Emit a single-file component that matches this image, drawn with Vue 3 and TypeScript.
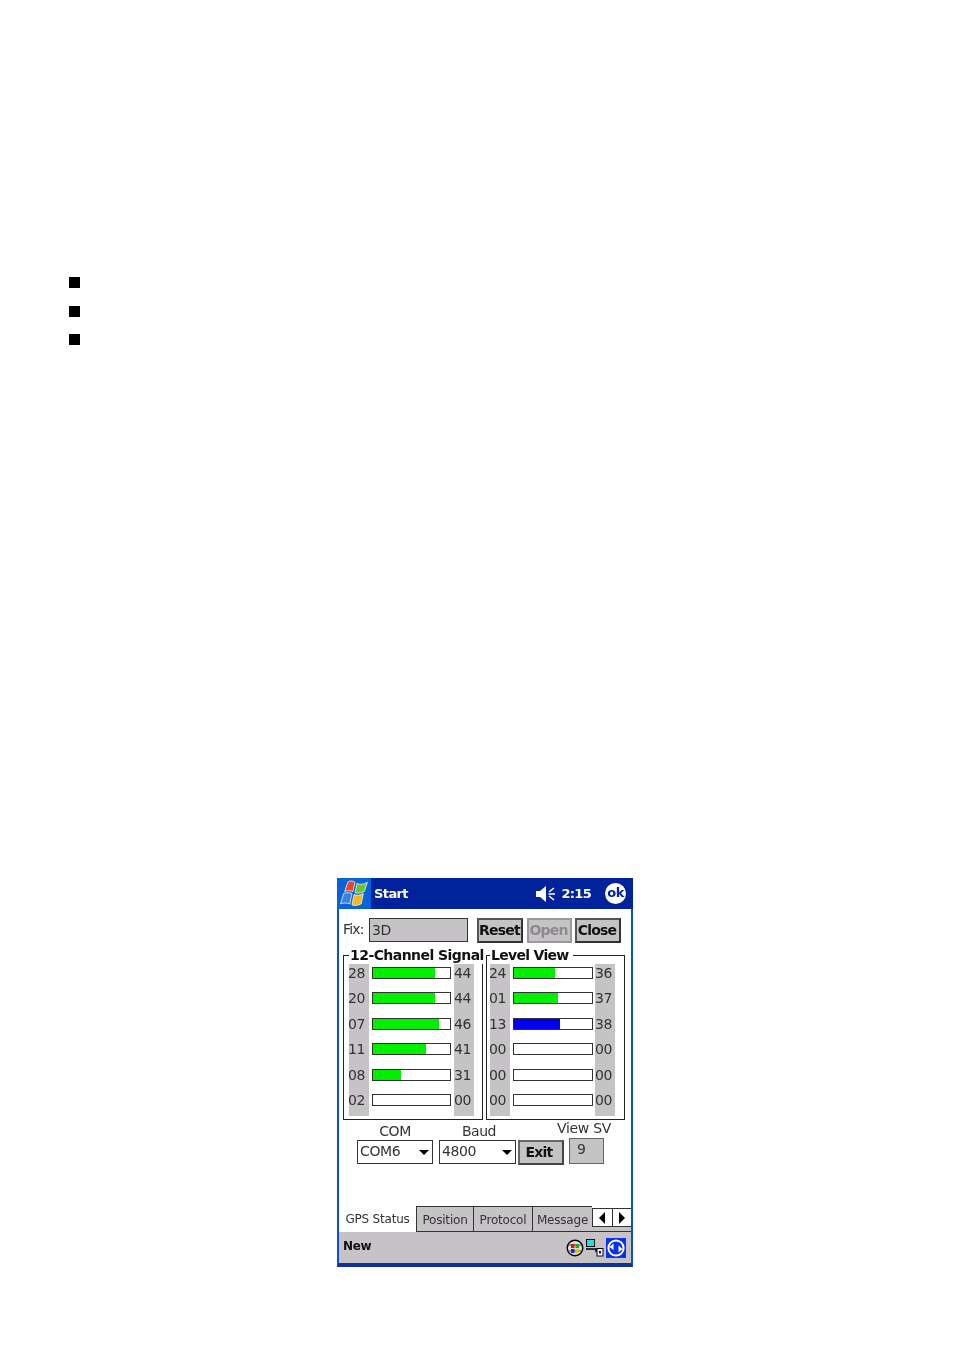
<script setup lang="ts">
interface Row { id: string; pct: number; val: string; color?: string }
const left: Row[] = [
  { id: '28', pct: 80, val: '44' },
  { id: '20', pct: 80, val: '44' },
  { id: '07', pct: 86, val: '46' },
  { id: '11', pct: 69, val: '41' },
  { id: '08', pct: 37, val: '31' },
  { id: '02', pct: 0, val: '00' },
]
const right: Row[] = [
  { id: '24', pct: 53, val: '36' },
  { id: '01', pct: 56, val: '37' },
  { id: '13', pct: 59, val: '38', color: '#0000f0' },
  { id: '00', pct: 0, val: '00' },
  { id: '00', pct: 0, val: '00' },
  { id: '00', pct: 0, val: '00' },
]
const groups = [
  { name: 'left', legend: '12-Channel Signal', rows: left },
  { name: 'right', legend: 'Level View', rows: right },
]
const tabs = ['Position', 'Protocol', 'Message']
</script>

<template>
  <main class="page">
    <ul class="bullets">
      <li></li>
      <li></li>
      <li></li>
    </ul>

    <section class="device">
      <header class="titlebar">
        <div class="start-tile">
          <svg width="32" height="31" viewBox="0 0 30 30">
            <path d="M9 4 C12 2 14 3 16 4 L14 13 C11 12 9 12 6 13 Z" fill="#e8452a" stroke="#fff" stroke-width=".7" />
            <path d="M18 5 C21 7 25 6 28 4 L25 13 C21 15 18 15 16 14 Z" fill="#6cc332" stroke="#fff" stroke-width=".7" />
            <path d="M5 15 C8 14 11 14 13 15 L11 25 C8 24 5 24 2 25 Z" fill="#3b7fe0" stroke="#fff" stroke-width=".7" />
            <path d="M15 16 C18 17 21 17 24 15 L22 25 C18 27 15 27 13 26 Z" fill="#f2b81e" stroke="#fff" stroke-width=".7" />
          </svg>
        </div>
        <span class="start-text">Start</span>
        <svg class="speaker" width="20" height="18" viewBox="0 0 20 18">
          <path d="M0 6 H4 L10 1 V17 L4 12 H0 Z" fill="#fff" />
          <path d="M18 3 L13 7 M12.5 9 H19 M13 11 L18 15" stroke="#fff" stroke-width="1.6" fill="none" />
        </svg>
        <span class="clock">2:15</span>
        <span class="ok">ok</span>
      </header>

      <div class="content">
        <div class="fix-row">
          <span class="fix-label">Fix:</span>
          <span class="fix-value">3D</span>
          <button class="btn reset">Reset</button>
          <button class="btn open">Open</button>
          <button class="btn close">Close</button>
        </div>

        <div class="groups">
          <div v-for="g in groups" :key="g.name" class="group" :class="g.name">
            <span class="legend">{{ g.legend }}</span>
            <div class="col nums first">
              <span v-for="(r, i) in g.rows" :key="i">{{ r.id }}</span>
            </div>
            <div class="col bars">
              <div v-for="(r, i) in g.rows" :key="i" class="bar">
                <div class="fill" :style="{ width: r.pct + '%', background: r.color || '#00f000' }"></div>
              </div>
            </div>
            <div class="col nums">
              <span v-for="(r, i) in g.rows" :key="i">{{ r.val }}</span>
            </div>
          </div>
        </div>

        <div class="settings">
          <div class="field com">
            <span class="field-label">COM</span>
            <div class="select"><span>COM6</span><i class="caret"></i></div>
          </div>
          <div class="field baud">
            <span class="field-label">Baud</span>
            <div class="select"><span>4800</span><i class="caret"></i></div>
          </div>
          <button class="btn exit">Exit</button>
          <div class="field view">
            <span class="field-label">View SV</span>
            <div class="sv">9</div>
          </div>
        </div>

        <nav class="tabs">
          <span class="tab active">GPS Status</span>
          <span v-for="t in tabs" :key="t" class="tab" :class="t.toLowerCase()">{{ t }}</span>
          <span class="arrow-strip">
            <span class="arrows">
              <span class="arrow"><i class="tri-l"></i></span>
              <span class="arrow"><i class="tri-r"></i></span>
            </span>
          </span>
        </nav>
      </div>

      <footer class="menubar">
        <span class="new">New</span>
        <span class="tray">
          <svg width="18" height="18" viewBox="0 0 18 18">
            <circle cx="9" cy="9" r="7.8" fill="#ddd" stroke="#000" stroke-width="1.4" />
            <path d="M2 6 H16 M2 12 H16" stroke="#333" stroke-width=".8" />
            <rect x="5" y="5" width="3.5" height="4" fill="#e01010" />
            <rect x="9.5" y="5" width="3.5" height="4" fill="#10b020" />
            <rect x="5" y="10" width="3.5" height="4" fill="#1030e0" />
            <rect x="9.5" y="10" width="3.5" height="4" fill="#e8c000" />
          </svg>
          <svg width="20" height="18" viewBox="0 0 20 18">
            <rect x="1.5" y="0.5" width="8" height="7" fill="#20e0e0" stroke="#000" />
            <path d="M1 10 H11 V13" stroke="#000" stroke-width="1.4" fill="none" />
            <rect x="12" y="9.5" width="6" height="7.5" fill="#fff" stroke="#000" />
            <rect x="14" y="12" width="2" height="2.5" fill="#0000a0" />
          </svg>
          <svg class="sync" width="20" height="20" viewBox="0 0 20 20">
            <rect width="20" height="20" fill="#0a30f0" />
            <circle cx="10" cy="10" r="7.6" fill="none" stroke="#fff" stroke-width="2" />
            <path d="M3.5 9 L7.5 5.5 V12 Z M16.5 11 L12.5 7.5 V14.5 Z" fill="#fff" />
          </svg>
        </span>
      </footer>
    </section>
  </main>
</template>

<style scoped>
.page {
  width: 954px;
  height: 1351px;
  overflow: hidden;
  background: #fff;
  padding: 277px 0 0 69px;
  box-sizing: border-box;
  font-family: "DejaVu Sans", sans-serif;
  color: #111;
}
.bullets {
  list-style: none;
  margin: 0;
  padding: 0;
  display: flex;
  flex-direction: column;
  gap: 17.5px;
}
.bullets li {
  width: 11px;
  height: 11px;
  background: #000;
}
.device {
  width: 296px;
  height: 389px;
  margin: 533px 0 0 268px;
  display: flex;
  flex-direction: column;
  box-sizing: border-box;
  border-left: 2px solid #0a4fd8;
  border-right: 2px solid #0a4fd8;
  border-bottom: 4px solid #12309a;
  background: #fff;
  filter: blur(0.35px);
}
.titlebar {
  height: 31px;
  flex: none;
  margin: 0 -2px;
  background: #00229a;
  display: flex;
  align-items: center;
  color: #fff;
}
.start-tile {
  width: 34px;
  height: 31px;
  background: #0a62d8;
  display: flex;
  align-items: center;
  justify-content: center;
  margin-right: 3px;
}
.start-text {
  font-size: 13px;
  font-weight: 700;
  letter-spacing: -0.6px;
  flex: 1;
}
.speaker {
  margin-right: 5px;
}
.clock {
  font-size: 13px;
  font-weight: 700;
  letter-spacing: -0.7px;
  margin-right: 14px;
}
.ok {
  width: 21px;
  height: 21px;
  border-radius: 50%;
  background: #fff;
  color: #00229a;
  font-size: 13px;
  font-weight: 700;
  line-height: 20px;
  text-align: center;
  margin-right: 7px;
  letter-spacing: -0.5px;
}
.content {
  flex: 1;
  display: flex;
  flex-direction: column;
  min-height: 0;
}
.fix-row {
  display: flex;
  align-items: flex-start;
  margin: 9px 0 0 4px;
  height: 25px;
}
.fix-label {
  font-size: 14px;
  letter-spacing: -0.8px;
  width: 26px;
  line-height: 22px;
  color: #333;
}
.fix-value {
  width: 99px;
  height: 24px;
  box-sizing: border-box;
  background: #c6c3c6;
  border: 1.5px solid #333;
  font-size: 14px;
  line-height: 22px;
  padding-left: 2px;
  letter-spacing: -0.4px;
  margin-right: 9px;
  color: #333;
}
.btn {
  box-sizing: border-box;
  background: #c6c3c6;
  border: 2px solid #333;
  border-color: #555 #333 #333 #555;
  padding: 0 2px 2px 0;
  height: 25px;
  font-family: "DejaVu Sans", sans-serif;
  font-size: 14px;
  font-weight: 700;
  letter-spacing: -0.8px;
  color: #111;
}
.reset { width: 46px; margin-right: 4px; }
.open { width: 45px; margin-right: 3px; color: #8c8a8c; border-color: #9a9a9a; }
.close { width: 46px; }
.groups {
  display: flex;
  gap: 3px;
  margin: 12px 0 0 4px;
}
.group {
  position: relative;
  height: 165px;
  box-sizing: border-box;
  border: 1.5px solid #222;
  display: flex;
  padding: 8px 0 3px 5px;
}
.group.left { width: 140px; }
.group.right { width: 139px; padding-left: 3px; }
.legend {
  position: absolute;
  top: -10.5px;
  left: 5px;
  background: #fff;
  padding: 0 1px;
  font-size: 14px;
  font-weight: 700;
  line-height: 18px;
  letter-spacing: -0.55px;
  white-space: nowrap;
}
.group.right .legend { left: 3px; padding-right: 4px; letter-spacing: -0.7px; }
.col {
  display: flex;
  flex-direction: column;
}
.nums {
  width: 20px;
  background: #c6c3c6;
  font-size: 14px;
  letter-spacing: -0.4px;
  color: #333;
  line-height: 18px;
  flex: none;
  gap: 7.4px;
}
.nums span {
  display: block;
  height: 18px;
}
.nums.first span {
  margin-left: -1px;
}
.bars {
  width: 79px;
  margin: 0 3px;
  flex: none;
  padding-top: 3px;
  gap: 13.4px;
}
.right .bars {
  width: 80px;
  margin-right: 2px;
}
.bar {
  height: 12px;
  flex: none;
  box-sizing: border-box;
  border: 1.5px solid #333;
  background: #fff;
}
.fill {
  height: 100%;
}
.settings {
  display: flex;
  align-items: flex-end;
  height: 44px;
  margin-left: 18px;
}
.field {
  display: flex;
  flex-direction: column;
  align-items: center;
}
.field-label {
  font-size: 14px;
  line-height: 17px;
  letter-spacing: -0.4px;
  color: #333;
}
.select {
  box-sizing: border-box;
  height: 24px;
  border: 1.5px solid #333;
  display: flex;
  align-items: center;
  justify-content: space-between;
  padding: 0 2px;
  font-size: 14px;
  letter-spacing: -0.4px;
  color: #333;
  background: #fff;
  align-self: stretch;
}
.select span {
  margin-top: -2px;
}
.com { width: 76px; margin-right: 6px; }
.baud { width: 77px; margin-right: 2px; }
.baud .field-label { margin-left: 3px; letter-spacing: -0.5px; }
.caret {
  width: 0;
  height: 0;
  border-left: 5px solid transparent;
  border-right: 5px solid transparent;
  border-top: 5px solid #000;
  margin-right: 1px;
}
.exit {
  width: 46px;
  height: 25px;
  margin-right: 5px;
  margin-bottom: -1px;
  padding-right: 4px;
  border-color: #666 #444 #444 #666;
}
.view {
  width: 35px;
  white-space: nowrap;
}
.view .field-label {
  margin-bottom: 1px;
  margin-left: -5px;
  letter-spacing: -0.3px;
}
.sv {
  width: 35px;
  height: 26px;
  box-sizing: border-box;
  background: #c6c3c6;
  border: 1.5px solid #666;
  font-size: 14px;
  line-height: 20px;
  padding-left: 7px;
  color: #333;
}
.tabs {
  display: flex;
  margin-top: auto;
  height: 26px;
  flex: none;
  padding-left: 2px;
  font-size: 12px;
  letter-spacing: -0.2px;
  color: #333;
}
.tab {
  box-sizing: border-box;
  height: 26px;
  line-height: 27px;
  text-align: center;
  background: #c6c3c6;
  border-top: 1px solid #333;
  border-left: 1px solid #333;
  border-bottom: 1px solid #333;
  white-space: nowrap;
}
.tab.active {
  width: 75px;
  background: #fff;
  border-top: none;
  border-left: none;
  border-bottom: none;
  padding-right: 2px;
}
.tab.position { width: 57px; }
.tab.protocol { width: 59px; }
.tab.message { width: 60px; }
.arrow-strip {
  flex: 1;
  box-sizing: border-box;
  height: 26px;
  padding-top: 2px;
  background: linear-gradient(#fff 0 2px, #c6c3c6 2px);
  border-bottom: 1px solid #333;
}
.arrows {
  display: flex;
  height: 19px;
  box-sizing: border-box;
  border: 1px solid #333;
  border-right: none;
  background: #fff;
}
.arrow {
  flex: 1;
  display: flex;
  align-items: center;
  justify-content: center;
}
.arrow + .arrow {
  border-left: 1px solid #333;
}
.tri-l, .tri-r {
  width: 0;
  height: 0;
  border-top: 6px solid transparent;
  border-bottom: 6px solid transparent;
}
.tri-l { border-right: 6px solid #000; }
.tri-r { border-left: 6px solid #000; }
.menubar {
  height: 31px;
  flex: none;
  background: #c6c3c6;
  display: flex;
  align-items: center;
  justify-content: space-between;
  padding: 0 5px 0 4px;
}
.new {
  font-size: 12px;
  font-weight: 700;
  letter-spacing: -0.3px;
  margin-top: -3px;
}
.tray {
  display: flex;
  align-items: center;
  gap: 1px;
}
</style>
